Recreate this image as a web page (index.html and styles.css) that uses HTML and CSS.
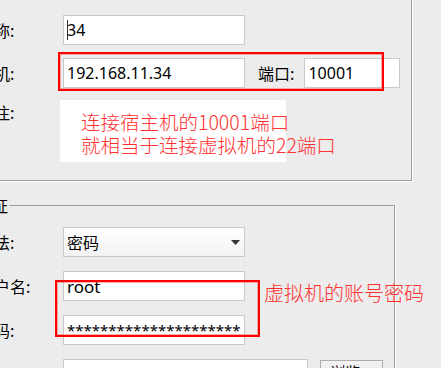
FILE: index.html
```html
<!DOCTYPE html>
<html lang="zh-CN">
<head>
    <meta charset="UTF-8">
    <title>连接设置</title>
    <link rel="stylesheet" href="styles.css">
</head>
<body>
    <div class="dialog">
        <div class="group conn">
            <div class="row">
                <span class="label">名称:</span>
                <div class="field"><span class="caret"></span>34</div>
            </div>
            <div class="row host-row">
                <span class="label">主机:</span>
                <div class="field">192.168.11.34</div>
                <span class="label port-label">端口:</span>
                <div class="field port">10001</div>
                <div class="mark mark-host"></div>
            </div>
            <div class="row remark-row">
                <span class="label">备注:</span>
                <div class="remark">
                    <p>连接宿主机的10001端口</p>
                    <p>就相当于连接虚拟机的22端口</p>
                </div>
            </div>
        </div>

        <div class="group auth">
            <span class="legend">认证</span>
            <div class="row">
                <span class="label">方法:</span>
                <div class="field select">
                    <span>密码</span>
                    <svg width="9" height="5" viewBox="0 0 9 5"><path d="M0 0h9L4.5 5z" fill="#333"/></svg>
                </div>
            </div>
            <div class="account">
                <div class="row">
                    <span class="label">用户名:</span>
                    <div class="field user">root</div>
                </div>
                <div class="row">
                    <span class="label">密码:</span>
                    <div class="field pass">*********************</div>
                </div>
                <div class="mark mark-account"></div>
                <p class="note">虚拟机的账号密码</p>
            </div>
            <div class="row">
                <span class="label">私钥:</span>
                <div class="field key"></div>
                <button class="btn">浏览...</button>
            </div>
        </div>
    </div>
</body>
</html>
```

FILE: styles.css
```css
body {
    margin: 0;
    width: 441px;
    height: 368px;
    overflow: hidden;
    background-color: #ececec;
    font-family: "Noto Sans CJK SC", sans-serif;
    color: #000;
}
.dialog {
    margin-left: -40px;
}
.group {
    position: relative;
    box-sizing: border-box;
    border: 1px solid #a0a0a0;
    box-shadow: 1px 1px 0 #fff;
    padding: 0 0 0 17px;
}
.conn {
    width: 452px;
    margin-top: -40px;
    padding-top: 54px;
    padding-bottom: 18px;
}
.row {
    display: flex;
    align-items: center;
    height: 30px;
    margin-bottom: 13px;
}
.host-row {
    position: relative;
    margin-bottom: 12px;
}
.label {
    flex: none;
    width: 85px;
    font-size: 16px;
    line-height: 20px;
}
.field {
    box-sizing: border-box;
    display: flex;
    align-items: center;
    flex: none;
    width: 182px;
    height: 30px;
    padding: 0 3px;
    background-color: #fff;
    border: 1px solid #c9c9c9;
    font-family: "Noto Sans", "Noto Sans CJK SC", sans-serif;
    font-size: 16px;
}
.caret {
    width: 1px;
    height: 20px;
    margin-right: -1px;
    background-color: #333;
}
.port-label {
    width: auto;
    margin-left: 13px;
}
.port {
    width: 96px;
    margin-left: 10px;
}
.remark-row {
    align-items: flex-start;
    height: 62px;
    margin-bottom: 0;
}
.remark-row .label {
    margin-top: 2px;
}
.remark {
    box-sizing: border-box;
    width: 226px;
    height: 62px;
    margin-left: -3px;
    padding: 10px 0 0 21px;
    background-color: #fff;
    white-space: nowrap;
}
.remark p,
.note {
    margin: 0;
    color: #ff3030;
    font-size: 19.5px;
    font-weight: 300;
    line-height: 23px;
}
.mark {
    position: absolute;
    box-sizing: border-box;
    border: 2px solid #f00;
    box-shadow: inset 0 0 0 1px rgba(255, 0, 0, 0.3);
}
.mark-host {
    left: 80px;
    top: -6px;
    width: 326px;
    height: 39px;
}
/* auth group */
.auth {
    width: 435px;
    margin-top: 24px;
    padding-top: 21px;
    padding-bottom: 20px;
}
.legend {
    position: absolute;
    left: 15px;
    top: -11px;
    padding-right: 1px;
    background-color: #ececec;
    font-size: 16px;
    line-height: 20px;
}
.auth .row {
    margin-bottom: 14px;
}
.select {
    justify-content: space-between;
    padding-right: 4px;
    background: linear-gradient(#fff, #f2f2f2);
    font-family: "Noto Sans CJK SC", sans-serif;
}
.account {
    position: relative;
}
.user {
    font-size: 17px;
}
.pass {
    font-size: 15px;
}
.mark-account {
    left: 77px;
    top: 9px;
    width: 205px;
    height: 57px;
}
.note {
    position: absolute;
    left: 286px;
    top: 10px;
    font-size: 20px;
    white-space: nowrap;
}
.key {
    width: 245px;
}
.btn {
    align-self: flex-start;
    box-sizing: border-box;
    height: 28px;
    width: 63px;
    margin: 1px 0 0 12px;
    padding: 0 0 4px;
    background: linear-gradient(#f3f3f3, #e2e2e2);
    border: 1px solid #adadad;
    font-family: "Noto Sans CJK SC", sans-serif;
    font-size: 15px;
    line-height: 20px;
}
```
